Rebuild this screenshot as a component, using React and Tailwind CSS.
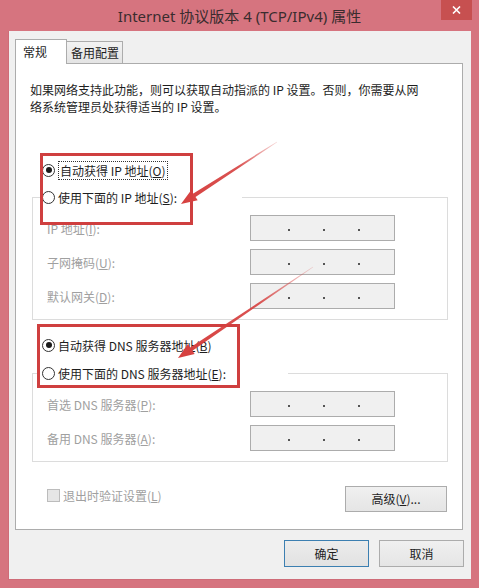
import React from 'react'

const FONT = { fontFamily: '"Noto Sans CJK SC", "Noto Sans", sans-serif' }

// ── Small controls ────────────────────────────────────────────────────────────
function Radio({ checked }) {
  return (
    <span className="w-[13px] h-[13px] shrink-0 rounded-full border border-[#333] bg-white flex items-center justify-center">
      {checked && <span className="w-[6px] h-[6px] rounded-full bg-[#1a1a1a]" />}
    </span>
  )
}

function IpBox() {
  return (
    <div className="w-[145px] h-[26px] border border-[#acacac] bg-[#f0f0f0] flex items-center pl-[37px] gap-[33px]">
      <span className="w-[2px] h-[2px] mt-[4px] bg-[#555]" />
      <span className="w-[2px] h-[2px] mt-[4px] bg-[#555]" />
      <span className="w-[2px] h-[2px] mt-[4px] bg-[#555]" />
    </div>
  )
}

function Field({ label, keyChar }) {
  return (
    <div className="flex items-center h-[26px]">
      <span className="w-[217px] pl-[14px] text-[12px] leading-[17px] text-[#a0a0a0]">
        {label}(<u>{keyChar}</u>):
      </span>
      <IpBox />
    </div>
  )
}

function Group({ legendWidth, caption, keyChar, children }) {
  return (
    <fieldset className="ml-[16px] w-[416px] border border-[#dcdcdc] pb-[10px]">
      <legend className="ml-[7px] pl-[2px] h-[18px] bg-white flex items-center gap-[3px]" style={{ width: legendWidth }}>
        <Radio />
        <span className="text-[12px] leading-[17px] text-[#1e1e1e] whitespace-nowrap">
          {caption}(<u>{keyChar}</u>):
        </span>
      </legend>
      <div className="mt-[9px] flex flex-col gap-[8px]">{children}</div>
    </fieldset>
  )
}

// ── Annotation overlay (red boxes + arrows) ──────────────────────────────────
function Annotations() {
  return (
    <svg className="absolute inset-0 pointer-events-none" width="479" height="588">
      <defs>
        <linearGradient id="a1" x1="277" y1="142" x2="181" y2="204" gradientUnits="userSpaceOnUse">
          <stop offset="0" stopColor="#d6403f" stopOpacity="0.2" />
          <stop offset="0.4" stopColor="#d6403f" stopOpacity="0.9" />
          <stop offset="1" stopColor="#d6403f" />
        </linearGradient>
        <linearGradient id="a2" x1="313" y1="267" x2="178" y2="358" gradientUnits="userSpaceOnUse">
          <stop offset="0" stopColor="#d6403f" stopOpacity="0.2" />
          <stop offset="0.4" stopColor="#d6403f" stopOpacity="0.9" />
          <stop offset="1" stopColor="#d6403f" />
        </linearGradient>
      </defs>
      <rect x="41.5" y="154.5" width="150" height="69" fill="none" stroke="#cf3f3f" strokeWidth="3" />
      <rect x="38.5" y="325.5" width="200" height="61" fill="none" stroke="#cf3f3f" strokeWidth="3" />
      <polygon
        fill="url(#a1)"
        points="277.2,142.3 195.5,197 197.7,200.3 181,204 191.1,190.3 193.3,193.6 276.8,141.7"
      />
      <polygon
        fill="url(#a2)"
        points="313.2,267.2 192.4,350.8 194.7,354.1 178,358 187.9,344.1 190.2,347.4 312.8,266.8"
      />
    </svg>
  )
}

// ── Dialog ────────────────────────────────────────────────────────────────────
export default function App() {
  return (
    <div className="relative w-[479px] h-[588px] bg-[#d6747f] flex flex-col overflow-hidden" style={FONT}>

      {/* Title bar */}
      <div className="relative h-[31px] shrink-0 flex items-center justify-center">
        <span className="text-[15px] text-[#3a2c2e] mt-[1px]" style={{ fontFamily: '"Noto Sans", "Noto Sans CJK SC", sans-serif' }}>
          Internet 协议版本 4 (TCP/IPv4) 属性
        </span>
        <div className="absolute right-[7px] top-0 w-[31px] h-[20px] bg-[#c75050] flex items-center justify-center">
          <svg width="9" height="8" viewBox="0 0 9 8">
            <path d="M1 0.5 L8 7.5 M8 0.5 L1 7.5" stroke="#fff" strokeWidth="1.6" />
          </svg>
        </div>
      </div>

      {/* Client area */}
      <div className="ml-[8px] w-[463px] h-[549px] bg-[#f0f0f0] border-l border-b border-[#cf6c78] flex flex-col">

        {/* Tabs */}
        <div className="mt-[8px] ml-[6px] flex items-end">
          <div className="relative z-10 w-[52px] h-[25px] -mb-px bg-white border border-b-0 border-[#acacac] pl-[7px] flex items-center text-[12px] text-[#1e1e1e]">
            常规
          </div>
          <div className="w-[56px] h-[22px] bg-gradient-to-b from-[#f2f2f2] to-[#e4e4e4] border border-l-0 border-b-0 border-[#acacac] pl-[4px] flex items-center text-[12px] text-[#1e1e1e]">
            备用配置
          </div>
        </div>

        {/* Tab panel */}
        <div className="ml-[6px] w-[448px] bg-white border border-[#acacac] pb-[17px] flex flex-col">
          <p className="mt-[17px] ml-[14px] text-[12px] leading-[17px] text-[#1e1e1e] whitespace-nowrap">
            如果网络支持此功能，则可以获取自动指派的 IP 设置。否则，你需要从网<br />
            络系统管理员处获得适当的 IP 设置。
          </p>

          {/* IP address */}
          <div className="mt-[46px] ml-[26px] h-[18px] flex items-center gap-[3px]">
            <Radio checked />
            <span className="text-[12px] leading-[17px] text-[#1e1e1e] border border-dotted border-[#333] px-[1px] whitespace-nowrap">
              自动获得 IP 地址(<u>O</u>)
            </span>
          </div>
          <div className="mt-[9px]">
            <Group legendWidth={202} caption="使用下面的 IP 地址" keyChar="S">
              <Field label="IP 地址" keyChar="I" />
              <Field label="子网掩码" keyChar="U" />
              <Field label="默认网关" keyChar="D" />
            </Group>
          </div>

          {/* DNS */}
          <div className="mt-[16px] ml-[26px] h-[18px] flex items-center gap-[3px]">
            <Radio checked />
            <span className="text-[12px] leading-[17px] text-[#1e1e1e] whitespace-nowrap">
              自动获得 DNS 服务器地址(<u>B</u>)
            </span>
          </div>
          <div className="mt-[10px]">
            <Group legendWidth={248} caption="使用下面的 DNS 服务器地址" keyChar="E">
              <Field label="首选 DNS 服务器" keyChar="P" />
              <Field label="备用 DNS 服务器" keyChar="A" />
            </Group>
          </div>

          {/* Validate + advanced */}
          <div className="mt-[24px] flex items-start justify-between">
            <div className="ml-[31px] mt-[1px] h-[16px] flex items-center gap-[3px]">
              <span className="w-[13px] h-[13px] border border-[#bcbcbc] bg-[#e6e6e6]" />
              <span className="text-[12px] leading-[17px] text-[#a0a0a0] whitespace-nowrap">
                退出时验证设置(<u>L</u>)
              </span>
            </div>
            <button className="mr-[15px] w-[102px] h-[26px] border border-[#acacac] bg-gradient-to-b from-[#f0f0f0] to-[#e5e5e5] text-[12px] text-[#1e1e1e]">
              高级(<u>V</u>)...
            </button>
          </div>
        </div>

        {/* Dialog buttons */}
        <div className="mt-[10px] mr-[7px] flex justify-end gap-[10px]">
          <button className="w-[85px] h-[27px] border border-[#3c7fb1] bg-gradient-to-b from-[#ececec] to-[#e2e2e2] text-[12px] text-[#1e1e1e]">
            确定
          </button>
          <button className="w-[85px] h-[27px] border border-[#acacac] bg-gradient-to-b from-[#f0f0f0] to-[#e5e5e5] text-[12px] text-[#1e1e1e]">
            取消
          </button>
        </div>
      </div>

      <Annotations />
    </div>
  )
}
